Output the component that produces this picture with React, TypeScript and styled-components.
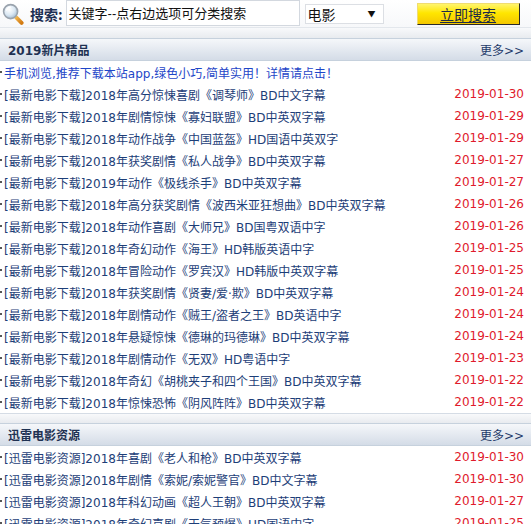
import { FC } from "react";
import styled, { createGlobalStyle } from "styled-components";

const GlobalStyle = createGlobalStyle`
  html, body {
    margin: 0;
    padding: 0;
    background: #ffffff;
  }
  body {
    font-family: "DejaVu Sans", "Noto Sans CJK SC", sans-serif;
    font-size: 12px;
    overflow: hidden;
  }
`;

const Page = styled("div")`
  width: 531px;
  background: #fff;
`;

const SearchBar = styled("div")`
  display: flex;
  align-items: center;
  height: 27px;
  padding-left: 2px;
  border-bottom: 1px solid #e3e7ec;
  background: linear-gradient(#ffffff, #f7f8fa);
`;

const Label = styled("span")`
  margin-left: 6px;
  font-family: "Noto Sans CJK SC", sans-serif;
  font-size: 14px;
  font-weight: bold;
  color: #1d2f52;
`;

const KeywordBox = styled("div")`
  margin-left: 3px;
  width: 230px;
  height: 24px;
  margin-top: -2px;
  border: 1px solid #d3d8df;
  background: #fff;
  display: flex;
  align-items: center;
  padding-left: 2px;
  font-family: "Liberation Sans", "Noto Sans CJK SC", sans-serif;
  font-size: 13px;
  color: #111;
`;

const SelectBox = styled("div")`
  margin-left: 5px;
  width: 77px;
  height: 20px;
  border: 1px solid #dcdfe4;
  background: #fff;
  display: flex;
  align-items: center;
  justify-content: space-between;
  padding: 0 7px 0 2px;
  box-sizing: border-box;
  width: 79px;
  font-family: "Noto Sans CJK SC", sans-serif;
  font-size: 14px;
  color: #111;
`;

const Arrow = styled("span")`
  font-size: 8px;
  color: #111;
`;

const SearchButton = styled("div")`
  margin-left: 33px;
  width: 101px;
  height: 20px;
  border: 1px solid;
  border-color: #f0dc70 #2a2a2a #2a2a2a #f0dc70;
  background: linear-gradient(#fff56e, #ffe600 45%, #f4c700);
  display: flex;
  align-items: center;
  justify-content: center;
  font-family: "Noto Sans CJK SC", sans-serif;
  font-size: 14px;
  color: #1d2a48;
  text-decoration: underline;
  text-underline-offset: 2px;
`;

const Band = styled("div")<{ $top?: boolean }>`
  height: ${({ $top }) => ($top ? "10px" : "9px")};
  background: linear-gradient(#f8f9fb, #e8ebef);
  border-top: ${({ $top }) => ($top ? "none" : "1px solid #d5dce5")};
`;

const Header = styled("div")`
  height: 21px;
  border-top: 1px solid #c6d1dd;
  border-bottom: 1px solid #c6d1dd;
  background: linear-gradient(#f5f7fa, #d4dce7);
  display: flex;
  align-items: center;
  justify-content: space-between;
  padding: 0 7px 0 8px;
`;

const HeaderTitle = styled("span")`
  font-family: "DejaVu Sans", "Noto Sans CJK SC", sans-serif;
  font-size: 12px;
  font-weight: bold;
  color: #1e3152;
`;

const More = styled("a")`
  font-size: 12px;
  color: #1f3a6a;
  text-decoration: none;
`;

const List = styled("ul")`
  list-style: none;
  margin: 0;
  padding: 0;
`;

const Row = styled("li")`
  display: flex;
  align-items: center;
  justify-content: space-between;
  height: 22px;
  padding-right: 7px;
  white-space: nowrap;
  &::before {
    content: "";
    width: 2px;
    height: 2px;
    background: #555;
    margin-right: 2px;
    flex: none;
  }
`;

const Title = styled("a")<{ $promo?: boolean }>`
  flex: 1;
  color: ${({ $promo }) => ($promo ? "#1e46c8" : "#1d3e78")};
  text-decoration: none;
  overflow: hidden;
`;

const DateText = styled("span")`
  color: #e01a2c;
  font-size: 12px;
  flex: none;
`;

const Magnifier: FC = () => (
  <svg width="22" height="22" viewBox="0 0 22 22">
    <defs>
      <radialGradient id="glass" cx="40%" cy="35%" r="65%">
        <stop offset="0%" stopColor="#ffffff" />
        <stop offset="60%" stopColor="#dbe8f3" />
        <stop offset="100%" stopColor="#a9c1d6" />
      </radialGradient>
      <linearGradient id="handle" x1="0" y1="0" x2="1" y2="1">
        <stop offset="0%" stopColor="#f7c056" />
        <stop offset="100%" stopColor="#d27a12" />
      </linearGradient>
    </defs>
    <path d="M13.2 13.4 L19.6 19.8" stroke="url(#handle)" strokeWidth="4" strokeLinecap="round" />
    <circle cx="8.6" cy="8.6" r="7" fill="url(#glass)" stroke="#9aa3ad" strokeWidth="1.6" />
    <path d="M4.6 7.2 A4.4 4.4 0 0 1 8.4 4.2" stroke="#ffffff" strokeWidth="1.2" fill="none" strokeLinecap="round" />
  </svg>
);

type Item = { title: string; date: string };

const latest: Item[] = [
  { title: "[最新电影下载]2018年高分惊悚喜剧《调琴师》BD中文字幕", date: "2019-01-30" },
  { title: "[最新电影下载]2018年剧情惊悚《寡妇联盟》BD中英双字幕", date: "2019-01-29" },
  { title: "[最新电影下载]2018年动作战争《中国蓝盔》HD国语中英双字", date: "2019-01-29" },
  { title: "[最新电影下载]2018年获奖剧情《私人战争》BD中英双字幕", date: "2019-01-27" },
  { title: "[最新电影下载]2019年动作《极线杀手》BD中英双字幕", date: "2019-01-27" },
  { title: "[最新电影下载]2018年高分获奖剧情《波西米亚狂想曲》BD中英双字幕", date: "2019-01-26" },
  { title: "[最新电影下载]2018年动作喜剧《大师兄》BD国粤双语中字", date: "2019-01-26" },
  { title: "[最新电影下载]2018年奇幻动作《海王》HD韩版英语中字", date: "2019-01-25" },
  { title: "[最新电影下载]2018年冒险动作《罗宾汉》HD韩版中英双字幕", date: "2019-01-25" },
  { title: "[最新电影下载]2018年获奖剧情《贤妻/爱·欺》BD中英双字幕", date: "2019-01-24" },
  { title: "[最新电影下载]2018年剧情动作《贼王/盗者之王》BD英语中字", date: "2019-01-24" },
  { title: "[最新电影下载]2018年悬疑惊悚《德琳的玛德琳》BD中英双字幕", date: "2019-01-24" },
  { title: "[最新电影下载]2018年剧情动作《无双》HD粤语中字", date: "2019-01-23" },
  { title: "[最新电影下载]2018年奇幻《胡桃夹子和四个王国》BD中英双字幕", date: "2019-01-22" },
  { title: "[最新电影下载]2018年惊悚恐怖《阴风阵阵》BD中英双字幕", date: "2019-01-22" },
];

const thunder: Item[] = [
  { title: "[迅雷电影资源]2018年喜剧《老人和枪》BD中英双字幕", date: "2019-01-30" },
  { title: "[迅雷电影资源]2018年剧情《索妮/索妮警官》BD中文字幕", date: "2019-01-30" },
  { title: "[迅雷电影资源]2018年科幻动画《超人王朝》BD中英双字幕", date: "2019-01-27" },
  { title: "[迅雷电影资源]2018年奇幻喜剧《天气预爆》HD国语中字", date: "2019-01-25" },
];

const Section: FC<{ name: string; items: Item[]; first?: boolean; promo?: string }> = ({
  name,
  items,
  first,
  promo,
}) => (
  <section>
    <Band $top={first} />
    <Header>
      <HeaderTitle>{name}</HeaderTitle>
      <More href="#">更多&gt;&gt;</More>
    </Header>
    <List>
      {promo && (
        <Row>
          <Title $promo href="#">
            {promo}
          </Title>
        </Row>
      )}
      {items.map((it) => (
        <Row key={it.title}>
          <Title href="#">{it.title}</Title>
          <DateText>{it.date}</DateText>
        </Row>
      ))}
    </List>
  </section>
);

const App: FC = () => (
  <Page>
    <GlobalStyle />
    <SearchBar>
      <Magnifier />
      <Label>搜索:</Label>
      <KeywordBox>关键字--点右边选项可分类搜索</KeywordBox>
      <SelectBox>
        电影
        <Arrow>▼</Arrow>
      </SelectBox>
      <SearchButton>立即搜索</SearchButton>
    </SearchBar>
    <Section
      first
      name="2019新片精品"
      items={latest}
      promo="手机浏览,推荐下载本站app,绿色小巧,简单实用！详情请点击！"
    />
    <Section name="迅雷电影资源" items={thunder} />
  </Page>
);

export default App;
